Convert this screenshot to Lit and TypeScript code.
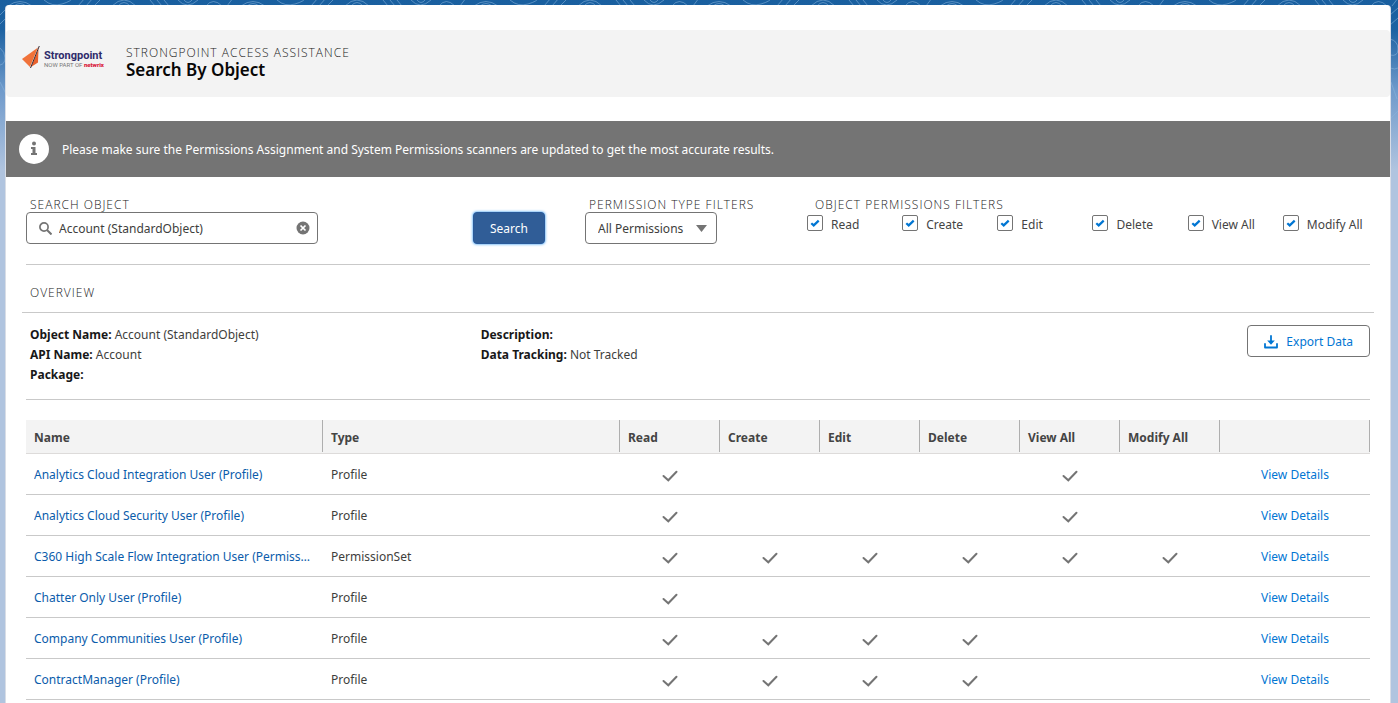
import { LitElement, html, css, svg, nothing } from "lit";
import { customElement, property } from "lit/decorators.js";

type Row = { name: string; type: string; grants: string[] };

const PERMISSIONS = ["Read", "Create", "Edit", "Delete", "View All", "Modify All"];

const ROWS: Row[] = [
  { name: "Analytics Cloud Integration User (Profile)", type: "Profile", grants: ["Read", "View All"] },
  { name: "Analytics Cloud Security User (Profile)", type: "Profile", grants: ["Read", "View All"] },
  { name: "C360 High Scale Flow Integration User (PermissionSet)", type: "PermissionSet", grants: PERMISSIONS },
  { name: "Chatter Only User (Profile)", type: "Profile", grants: ["Read"] },
  { name: "Company Communities User (Profile)", type: "Profile", grants: ["Read", "Create", "Edit", "Delete"] },
  { name: "ContractManager (Profile)", type: "Profile", grants: ["Read", "Create", "Edit", "Delete"] },
];

const reset = css`
  * { box-sizing: border-box; }
  svg { display: block; flex: none; }
  a { text-decoration: none; }
  a:hover { text-decoration: underline; }
  button, input, select { font: inherit; margin: 0; }
  .caps { font-family: "Open Sans", "Noto Sans", sans-serif; font-size: 12px; font-weight: 300; letter-spacing: 1px; text-transform: uppercase; color: #222; }
`;

@customElement("brand-header")
class BrandHeader extends LitElement {
  static styles = [reset, css`
    :host { display: block; padding: 25px 0 24px; }
    .bar { display: flex; align-items: flex-start; gap: 20px; min-height: 67px; padding: 12px 16px; background: #f3f3f3; border-radius: 4px; }
    .titles { padding-top: 2px; }
    .app { margin: 0; line-height: 17px; }
    .page { margin: 0; font-size: 17px; line-height: 18px; font-weight: 600; color: #080707; }
    .word { font: 700 11px "Roboto", sans-serif; fill: #2f2b6b; }
    .sub { font: 400 6px "Roboto", sans-serif; fill: #777; }
    .net { font-weight: 900; fill: #d9203c; }
  `];
  render() {
    return html`
      <header class="bar">
        <svg width="84" height="32" viewBox="0 0 84 32" role="img" aria-label="Strongpoint, now part of netwrix">
          <path d="M0 17L16 5.500L8 25Z" fill="#f0723a" />
          <path d="M16.500 7L16 20.500L9 25Z" fill="#e8602c" />
          <path d="M17.300 4L8.500 26" stroke="#3a2b35" stroke-width="1" fill="none" />
          <text class="word" x="22" y="17">Strongpoint</text>
          <text class="sub" x="22" y="25">NOW PART OF <tspan class="net">netwrix</tspan></text>
        </svg>
        <div class="titles">
          <p class="app caps">Strongpoint Access Assistance</p>
          <h1 class="page">Search By Object</h1>
        </div>
      </header>`;
  }
}

@customElement("notice-bar")
class NoticeBar extends LitElement {
  static styles = [reset, css`
    :host { display: flex; align-items: center; gap: 13px; min-height: 56px; padding: 0 13px; background: #747474; color: #fff; }
    .text { margin: 0; padding-top: 2px; font-size: 12px; line-height: 18px; }
  `];
  render() {
    return html`
      <svg width="30" height="30" viewBox="0 0 30 30" aria-hidden="true">
        <circle cx="15" cy="15" r="15" fill="#fff" />
        <circle cx="15" cy="9.500" r="2" fill="#747474" />
        <path d="M12 13h4.500v6H18v2h-6v-2h1.500v-4H12z" fill="#747474" />
      </svg>
      <p class="text">Please make sure the Permissions Assignment and System Permissions scanners are updated to get the most accurate results.</p>`;
  }
}

@customElement("search-filters")
class SearchFilters extends LitElement {
  static styles = [reset, css`
    :host { display: grid; grid-template-columns: 447fr 112fr 222fr 563fr; padding: 20px 0; border-bottom: 1px solid #c9c9c9; }
    .cell { min-width: 0; }
    .caption { display: block; padding: 0 4px; line-height: 15px; white-space: nowrap; }
    .search { display: flex; align-items: center; gap: 7px; width: 292px; max-width: 100%; height: 32px; padding: 0 7px 0 12px; border: 1px solid #747474; border-radius: 4px; background: #fff; }
    .search input { flex: 1; min-width: 0; padding: 0; border: 0; outline: 0; background: none; font-size: 12px; color: #3e3e3c; }
    .clear { padding: 0; border: 0; background: none; }
    .go { height: 32px; margin-top: 15px; padding: 0 16px; border: 1px solid #2a5a9a; border-radius: 4px; background: #305d97; color: #fff; font-size: 12px; box-shadow: 0 0 3px #1589ee; }
    .kind { appearance: none; width: 132px; height: 32px; padding: 0 28px 0 12px; border: 1px solid #747474; border-radius: 4px; font-size: 12px; color: #3e3e3c; display: block;
      background: #fff url("data:image/svg+xml,%3Csvg xmlns='http://www.w3.org/2000/svg' width='11' height='7'%3E%3Cpath d='M0 0h11L5.500 7z' fill='%23747474'/%3E%3C/svg%3E") no-repeat right 9px center; }
    .group { margin: 0 -8px 0 0; }
    .group .caption { padding: 0 8px; }
    .checks { display: grid; grid-template-columns: repeat(6, 1fr); padding-top: 3px; }
    .check { display: flex; align-items: flex-start; gap: 8px; min-width: 0; white-space: nowrap; font-size: 12px; line-height: 19px; color: #444; }
    .check input { appearance: none; flex: none; width: 16px; height: 16px; border: 1px solid #747474; border-radius: 2px; background: #fff; }
    .check input:checked { background: #fff url("data:image/svg+xml,%3Csvg xmlns='http://www.w3.org/2000/svg' width='10' height='8'%3E%3Cpath d='M1.300 4.200l2.400 2.200 5-4.800' fill='none' stroke='%230176d3' stroke-width='2.200'/%3E%3C/svg%3E") no-repeat center; }
  `];
  render() {
    return html`
      <div class="cell">
        <label class="caption caps" for="object">Search Object</label>
        <div class="search">
          <svg width="13" height="13" viewBox="0 0 13 13" fill="none" stroke="#747474" stroke-width="1.700" aria-hidden="true">
            <circle cx="5" cy="5" r="4.100" /><path d="M8 8l4.500 4.500" stroke-width="2" />
          </svg>
          <input id="object" type="text" value="Account (StandardObject)" />
          <button class="clear" aria-label="Clear">
            <svg width="14" height="14" viewBox="0 0 14 14"><circle cx="7" cy="7" r="6.500" fill="#747474" /><path d="M4.500 4.500l5 5m0-5l-5 5" stroke="#fff" stroke-width="1.700" /></svg>
          </button>
        </div>
      </div>
      <div class="cell"><button class="go">Search</button></div>
      <div class="cell">
        <label class="caption caps" for="kind">Permission Type Filters</label>
        <select class="kind" id="kind"><option>All Permissions</option></select>
      </div>
      <div class="cell">
        <div class="group" role="group" aria-labelledby="perms">
          <span class="caption caps" id="perms">Object Permissions Filters</span>
          <div class="checks">
            ${PERMISSIONS.map((p) => html`<label class="check"><input type="checkbox" checked />${p}</label>`)}
          </div>
        </div>
      </div>`;
  }
}

@customElement("object-overview")
class ObjectOverview extends LitElement {
  static styles = [reset, css`
    :host { display: block; border-bottom: 1px solid #c9c9c9; }
    .heading { margin: 0 -4px; padding: 19px 8px 10px; border-bottom: 1px solid #c9c9c9; line-height: 18px; }
    .details { display: grid; grid-template-columns: repeat(3, 1fr); margin: 0 -4px; padding: 12px 0 14px; font-size: 12px; line-height: 20px; color: #3e3e3c; }
    .facts { padding: 0 8px; }
    .facts p { margin: 0; }
    b { font-weight: 700; color: #181818; }
    .actions { padding-right: 4px; text-align: right; }
    .export { display: inline-flex; align-items: center; gap: 8px; height: 32px; padding: 1px 16px 0; border: 1px solid #747474; border-radius: 4px; background: #fff; color: #0176d3; }
  `];
  render() {
    return html`
      <h2 class="heading caps">Overview</h2>
      <div class="details">
        <div class="facts">
          <p><b>Object Name:</b> Account (StandardObject)</p>
          <p><b>API Name:</b> Account</p>
          <p><b>Package:</b></p>
        </div>
        <div class="facts">
          <p><b>Description:</b></p>
          <p><b>Data Tracking:</b> Not Tracked</p>
        </div>
        <div class="actions">
          <button class="export">
            <svg width="14" height="14" viewBox="0 0 14 14" fill="none" stroke="#0176d3" aria-hidden="true">
              <path d="M1 9V12.500H13V9" stroke-width="1.800" stroke-linejoin="round" stroke-linecap="round" />
              <path d="M7 1V7" stroke-width="1.800" stroke-linecap="round" />
              <path d="M3.200 5.500L7 9.700L10.800 5.500Z" fill="#0176d3" stroke="none" />
            </svg>
            Export Data
          </button>
        </div>
      </div>`;
  }
}

@customElement("access-table")
class AccessTable extends LitElement {
  @property({ attribute: false }) rows: Row[] = [];
  static styles = [reset, css`
    :host { display: block; padding-top: 20px; }
    table { width: 100%; table-layout: fixed; border-collapse: separate; border-spacing: 0; font-size: 12px; line-height: 18px; color: #3e3e3c; }
    .flag { width: 100px; }
    .link { width: 150px; }
    th { height: 34px; padding: 2px 8px 0; text-align: left; font-weight: 700; color: #444; border-bottom: 1px solid #dddbda; background: linear-gradient(#aeaeae, #aeaeae) no-repeat right top / 1px 32px #f3f3f3; }
    td { height: 41px; padding: 2px 8px 0; border-bottom: 1px solid #c9c9c9; white-space: nowrap; }
    td svg { margin: 2px auto 0; }
    a { color: #0b5cab; }
    .name { padding-right: 10px; }
    .name a { display: block; overflow: hidden; text-overflow: ellipsis; }
    .more { text-align: center; }
    .more a { color: #0176d3; }
  `];
  render() {
    return html`
      <table>
        <thead>
          <tr>
            <th>Name</th>
            <th>Type</th>
            ${PERMISSIONS.map((p) => html`<th class="flag">${p}</th>`)}
            <th class="link" aria-label="Details"></th>
          </tr>
        </thead>
        <tbody>
          ${this.rows.map((r) => html`
            <tr>
              <td class="name"><a href="#">${r.name}</a></td>
              <td>${r.type}</td>
              ${PERMISSIONS.map((p) => html`<td>${r.grants.includes(p) ? this.tick() : nothing}</td>`)}
              <td class="more"><a href="#">View Details</a></td>
            </tr>`)}
        </tbody>
      </table>`;
  }
  private tick() {
    return html`<svg width="16" height="12" viewBox="0 0 16 12" role="img" aria-label="Yes">${svg`<path d="M1.500 6L6.300 10.300L14.500 1.800" fill="none" stroke="#747474" stroke-width="2" stroke-linecap="round" />`}</svg>`;
  }
}

@customElement("app-root")
class AppRoot extends LitElement {
  static styles = [reset, css`
    :host {
      display: block; min-height: 100vh; padding: 5px 8px 0 6px; box-sizing: border-box;
      font-family: "Noto Sans", "Open Sans", sans-serif; font-size: 12px;
      background:
        url("data:image/svg+xml,%3Csvg xmlns='http://www.w3.org/2000/svg' width='233' height='120' fill='none' stroke='%2388b4dc' stroke-opacity='.55'%3E%3Cpath d='M8 6q12-9 24 0M14 6q6-5 12 0M44 0q8 7 18 4t10-6M78 6l7-8M86 6l7-8M94 6l8-8M112 6q12-12 24 0M118 6q6-7 12 0M150 0l5 6M157 0l5 6M164 0l5 6M178 0q9 10 20 0M184 0q4 5 8 0M206 6q7-9 16 0M227 6l6-8M0 15l6-6M0 24l6-6M225 15l8-7M225 25l8-7M225 39q8 2 8 10t-8 6M0 48q5 4 5 10t-5 7M225 68q5 2 8 0M226 82l6 17M0 82l6 12M225 119l8-8'/%3E%3C/svg%3E") repeat-x,
        linear-gradient(#195f9f 0, #1d62a2 30px, #6f9acb 90px, #b0c4df 170px) no-repeat #b0c4df;
    }
    .panel { min-height: calc(100vh - 5px); background: #fff; border-radius: 4px 4px 0 0; box-shadow: 1px 0 #d8dde6, -1px 0 #d8dde6; }
    .body { padding: 0 20px; }
  `];
  render() {
    return html`
      <main class="panel">
        <brand-header></brand-header>
        <notice-bar></notice-bar>
        <div class="body">
          <search-filters></search-filters>
          <object-overview></object-overview>
          <access-table .rows=${ROWS}></access-table>
        </div>
      </main>`;
  }
}
